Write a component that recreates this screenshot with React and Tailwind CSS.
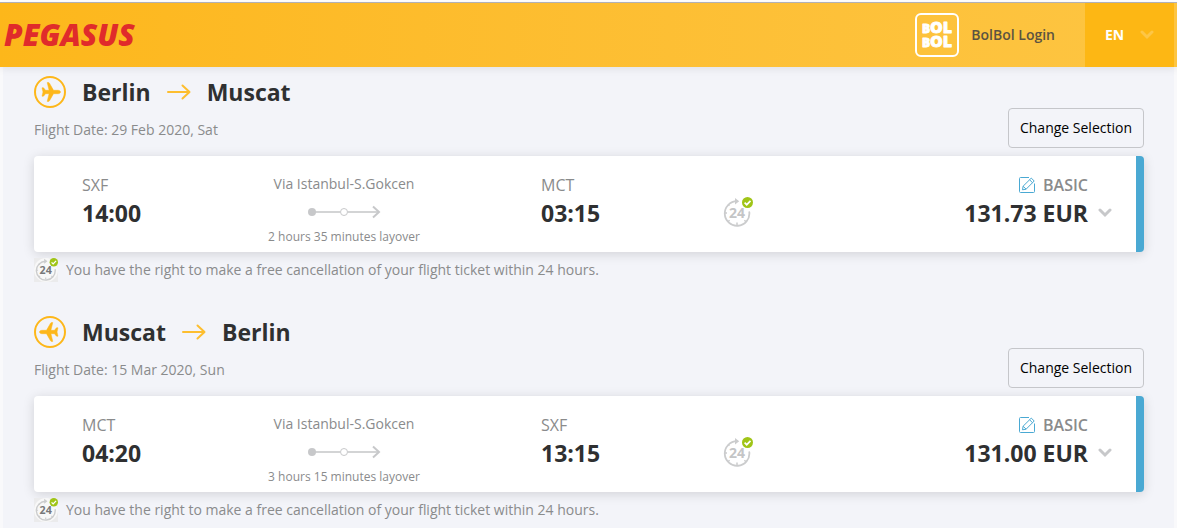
import React from "react";

const flights = [
  {
    from: "Berlin",
    to: "Muscat",
    returning: false,
    date: "29 Feb 2020, Sat",
    departure: { code: "SXF", time: "14:00" },
    arrival: { code: "MCT", time: "03:15" },
    layover: "2 hours 35 minutes layover",
    price: "131.73 EUR",
  },
  {
    from: "Muscat",
    to: "Berlin",
    returning: true,
    date: "15 Mar 2020, Sun",
    departure: { code: "MCT", time: "04:20" },
    arrival: { code: "SXF", time: "13:15" },
    layover: "3 hours 15 minutes layover",
    price: "131.00 EUR",
  },
];

const BolBolIcon = () => (
  <svg viewBox="0 0 44 44" className="h-11 w-11" fill="none" aria-hidden="true">
    <rect x="1" y="1" width="42" height="42" rx="5" stroke="#fff" strokeWidth="2" />
    <g
      fill="#fff"
      stroke="#fff"
      strokeWidth="0.8"
      strokeLinejoin="round"
      fontFamily="Open Sans, sans-serif"
      fontWeight="800"
      fontSize="16"
    >
      <text x="7" y="20">
        <tspan fontSize="12">B</tspan>OL
      </text>
      <text x="7" y="34">
        <tspan fontSize="12">B</tspan>OL
      </text>
    </g>
  </svg>
);

const PlaneIcon = ({ returning }) => (
  <svg viewBox="0 0 32 32" className="h-8 w-8" fill="none" aria-hidden="true">
    <circle cx="16" cy="16" r="15" stroke="#fdb71a" strokeWidth="2" />
    <path
      transform={returning ? "rotate(180 16 16)" : undefined}
      fill="#fdb71a"
      stroke="#fdb71a"
      strokeWidth="0.5"
      d="M26.5 16c0 1-1.2 1.7-2.4 1.7h-4.6l-4 7c-.3.5-.6.7-1.1.7h-1.2l1.9-7.7h-3.6l-1.6 2.1c-.2.3-.4.4-.7.4H8l1-4.2-1-4.2h1.2c.3 0 .5.1.7.4l1.6 2.1h3.6l-1.9-7.7h1.2c.5 0 .8.2 1.1.7l4 7h4.6c1.2 0 2.4.7 2.4 1.7z"
    />
  </svg>
);

const RouteArrow = () => (
  <svg
    viewBox="0 0 24 16"
    className="h-4 w-6"
    fill="none"
    stroke="#fdbe2f"
    strokeWidth="2"
    strokeLinecap="round"
    strokeLinejoin="round"
    aria-hidden="true"
  >
    <path d="M1 8h21M15.5 1.5l7 6.5-7 6.5" />
  </svg>
);

const LayoverLine = () => (
  <svg viewBox="0 0 74 14" className="h-3.5 w-[74px]" fill="none" aria-hidden="true">
    <path d="M5 7h28M41 7h30" stroke="#d3d4d5" strokeWidth="2" />
    <circle cx="5" cy="7" r="4" fill="#c7c8ca" />
    <circle cx="37" cy="7" r="3.5" stroke="#c7c8ca" />
    <path d="M66 1.5L72 7l-6 5.5" stroke="#c7c8ca" strokeWidth="2" />
  </svg>
);

const Cancel24Icon = ({ className, color, textColor }) => (
  <svg viewBox="0 0 30 30" className={className} fill="none" aria-hidden="true">
    <path
      d="M26.3 15.2A12.3 12.3 0 1 1 14 4.2"
      stroke={color}
      strokeWidth="1.8"
      strokeLinecap="round"
    />
    <path d="M12 1l4.2 3.2L12 7.4z" fill={color} />
    <path
      d="M14 28v-2.5M2 16h2M5 24.8l1.6-1.6M23 24.8l-1.6-1.6M5 7.4l1.4 1.4"
      stroke={color}
      strokeWidth="1.5"
    />
    <text
      x="14"
      y="20.5"
      textAnchor="middle"
      fill={textColor}
      fontFamily="Open Sans, sans-serif"
      fontSize="14"
      fontWeight="700"
    >
      24
    </text>
    <circle cx="24.5" cy="5.5" r="5.5" fill="#a0c517" />
    <path d="M21.6 5.7l2.1 2 3.8-3.9" stroke="#fff" strokeWidth="1.7" />
  </svg>
);

const EditIcon = () => (
  <svg
    viewBox="0 0 16 16"
    className="h-4 w-4"
    fill="none"
    stroke="#4aa9d3"
    strokeWidth="1"
    strokeLinejoin="round"
    aria-hidden="true"
  >
    <path d="M10 .5H1.5a1 1 0 0 0-1 1v13a1 1 0 0 0 1 1h13a1 1 0 0 0 1-1V6.5" />
    <path d="M3.5 12.8l.6-3.6 8.2-8.1 2.9 2.9-8.1 8.2zM4.1 9.2l3 3M10.6 2.8l2.9 2.9" />
  </svg>
);

const Chevron = ({ className }) => (
  <svg
    viewBox="0 0 14 10"
    className={className}
    fill="none"
    stroke="currentColor"
    strokeWidth="3"
    strokeLinecap="round"
    aria-hidden="true"
  >
    <path d="M2 2l5 5 5-5" />
  </svg>
);

const Header = () => (
  <header className="relative flex h-16 items-stretch justify-between bg-linear-to-r from-[#fdb71a] to-[#fdc542] pr-[3px] shadow-[0_2px_8px_rgba(0,0,0,0.08)]">
    <a
      href="#"
      className="flex items-center pl-1 text-[30px] leading-8 font-extrabold text-[#e02b2b] italic"
    >
      PEGASUS
    </a>
    <div className="flex">
      <a
        href="#"
        className="flex items-center gap-3 pr-[30px] text-sm font-semibold text-[#5c5341]"
      >
        <BolBolIcon />
        BolBol Login
      </a>
      <div className="relative flex w-[89px] items-center bg-[#fdb714] text-white">
        <select
          aria-label="Language"
          defaultValue="EN"
          className="h-full w-full appearance-none bg-transparent pl-5 text-sm font-bold"
        >
          <option value="EN">EN</option>
        </select>
        <Chevron className="pointer-events-none absolute right-5 h-2.5 w-3.5 text-[#fdc646]" />
      </div>
    </div>
  </header>
);

const Stop = ({ code, time }) => (
  <div>
    <div className="text-base font-medium text-[#8a8b8c]">{code}</div>
    <div className="text-[23px] leading-8 font-bold text-[#2f3031]">{time}</div>
  </div>
);

const FlightCard = ({ flight }) => (
  <div className="mt-2 grid h-24 grid-cols-[65fr_394fr_182fr_389fr] rounded-sm border-r-8 border-[#4aa9d3] bg-white pt-[17px] pr-6 pl-12 shadow-[0_2px_12px_rgba(0,0,0,0.14)]">
    <Stop {...flight.departure} />
    <div className="flex flex-col items-center text-[#8a8b8c]">
      <div className="text-sm leading-[22px]">Via Istanbul-S.Gokcen</div>
      <div className="py-2.5">
        <LayoverLine />
      </div>
      <div className="text-xs">{flight.layover}</div>
    </div>
    <Stop {...flight.arrival} />
    <div className="flex justify-between">
      <Cancel24Icon className="mt-6 h-[30px] w-[30px]" color="#cbcccd" textColor="#c4c5c6" />
      <div>
        <div className="flex items-center justify-end gap-2 pr-6 text-base font-semibold text-[#8a8b8c]">
          <EditIcon />
          BASIC
        </div>
        <button
          type="button"
          className="flex items-center gap-2.5 text-[23px] leading-8 font-bold text-[#2f3031]"
        >
          {flight.price}
          <Chevron className="h-2.5 w-3.5 text-[#c7c8ca]" />
        </button>
      </div>
    </div>
  </div>
);

const FlightSection = ({ flight }) => (
  <section>
    <div className="flex items-end justify-between">
      <div className="h-[72px]">
        <h2 className="flex items-center gap-4 text-[23px] leading-8 font-bold text-[#2f3031]">
          <PlaneIcon returning={flight.returning} />
          <span>{flight.from}</span>
          <RouteArrow />
          <span>{flight.to}</span>
        </h2>
        <p className="mt-3 text-sm text-[#8a8b8c]">Flight Date: {flight.date}</p>
      </div>
      <button
        type="button"
        className="h-10 rounded-sm border border-[#c5c6ca] px-[11px] text-sm font-medium text-black"
      >
        Change Selection
      </button>
    </div>
    <FlightCard flight={flight} />
    <div className="mt-1.5 flex items-center gap-2 text-sm text-[#8a8b8c]">
      <div className="h-6 w-6 bg-[#ebebec]">
        <div className="h-6 w-6 rounded-full bg-[#f8f8f8] pl-px">
          <Cancel24Icon className="h-[23px] w-[23px]" color="#cbcccd" textColor="#77787a" />
        </div>
      </div>
      You have the right to make a free cancellation of your flight ticket within 24 hours.
    </div>
  </section>
);

const App = () => {
  return (
    <div className="flex min-h-screen flex-col border-t-2 border-white font-['Open_Sans',sans-serif]">
      <div className="h-px bg-[#b5b5bb]" />
      <Header />
      <main className="flex grow flex-col gap-[34px] border-x-3 border-[#f9f9fb] bg-[#f3f4f9] pt-[9px] pr-[30px] pl-[31px]">
        {flights.map((flight) => (
          <FlightSection key={flight.from} flight={flight} />
        ))}
      </main>
    </div>
  );
};

export default App;
